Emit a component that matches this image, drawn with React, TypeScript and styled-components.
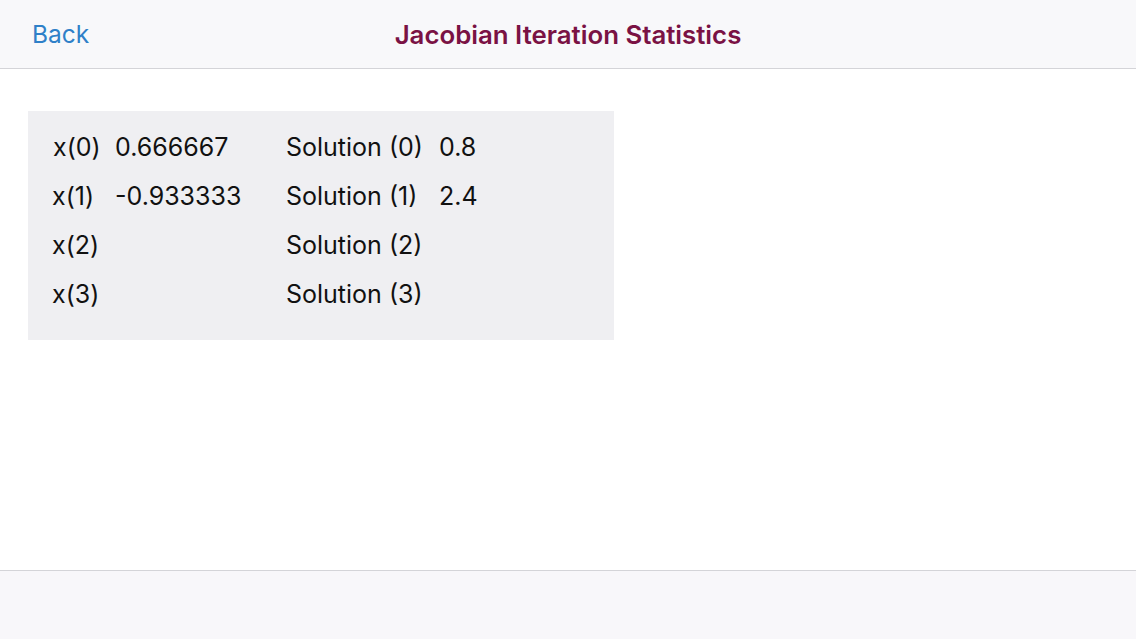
import { Fragment } from "react";
import styled, { createGlobalStyle } from "styled-components";

const GlobalStyle = createGlobalStyle`
  html, body {
    margin: 0;
    padding: 0;
    height: 100%;
    background: #ffffff;
    font-family: Inter, "Open Sans", "Liberation Sans", sans-serif;
  }
  #root {
    height: 100%;
  }
`;

const Screen = styled.div`
  display: flex;
  flex-direction: column;
  width: 1136px;
  height: 639px;
  overflow: hidden;
`;

const NavBar = styled.header`
  position: relative;
  display: flex;
  align-items: center;
  justify-content: center;
  height: 68px;
  background: #f8f8fa;
  border-bottom: 1px solid #d4d4d8;
  flex-shrink: 0;
`;

const BackButton = styled.button`
  position: absolute;
  left: 32px;
  top: 50%;
  transform: translateY(-50%);
  background: none;
  border: none;
  padding: 0;
  font-family: inherit;
  font-size: 24.5px;
  color: #2f80c8;
  cursor: pointer;
`;

const Title = styled.h1`
  margin: 0;
  font-size: 25.8px;
  font-weight: 600;
  color: #7a1244;
`;

const Content = styled.main`
  flex: 1;
  padding: 42px 28px 0;
`;

const Panel = styled.section`
  width: 586px;
  box-sizing: border-box;
  padding: 11px 0 22px 24px;
  background: #efeff2;
  display: grid;
  grid-template-columns: 63px 171px 153px 1fr;
  grid-auto-rows: 49px;
  align-items: center;
`;

const Cell = styled.span<{ $shift?: number }>`
  font-size: 25px;
  color: #111111;
  white-space: nowrap;
  margin-left: ${(p) => p.$shift ?? 0}px;
`;

const Toolbar = styled.footer`
  height: 68px;
  background: #f8f7fa;
  border-top: 1px solid #d4d4d8;
  flex-shrink: 0;
`;

const rows = [
  { x: "x(0)", xv: "0.666667", s: "Solution (0)", sv: "0.8", shift: 1 },
  { x: "x(1)", xv: "-0.933333", s: "Solution (1)", sv: "2.4", shift: 0 },
  { x: "x(2)", xv: "", s: "Solution (2)", sv: "", shift: 0 },
  { x: "x(3)", xv: "", s: "Solution (3)", sv: "", shift: 0 },
];

export default function App() {
  return (
    <>
      <GlobalStyle />
      <Screen>
        <NavBar>
          <BackButton>Back</BackButton>
          <Title>Jacobian Iteration Statistics</Title>
        </NavBar>
        <Content>
          <Panel>
            {rows.map((r) => (
              <Fragment key={r.x}>
                <Cell $shift={r.shift}>{r.x}</Cell>
                <Cell>{r.xv}</Cell>
                <Cell>{r.s}</Cell>
                <Cell>{r.sv}</Cell>
              </Fragment>
            ))}
          </Panel>
        </Content>
        <Toolbar />
      </Screen>
    </>
  );
}
